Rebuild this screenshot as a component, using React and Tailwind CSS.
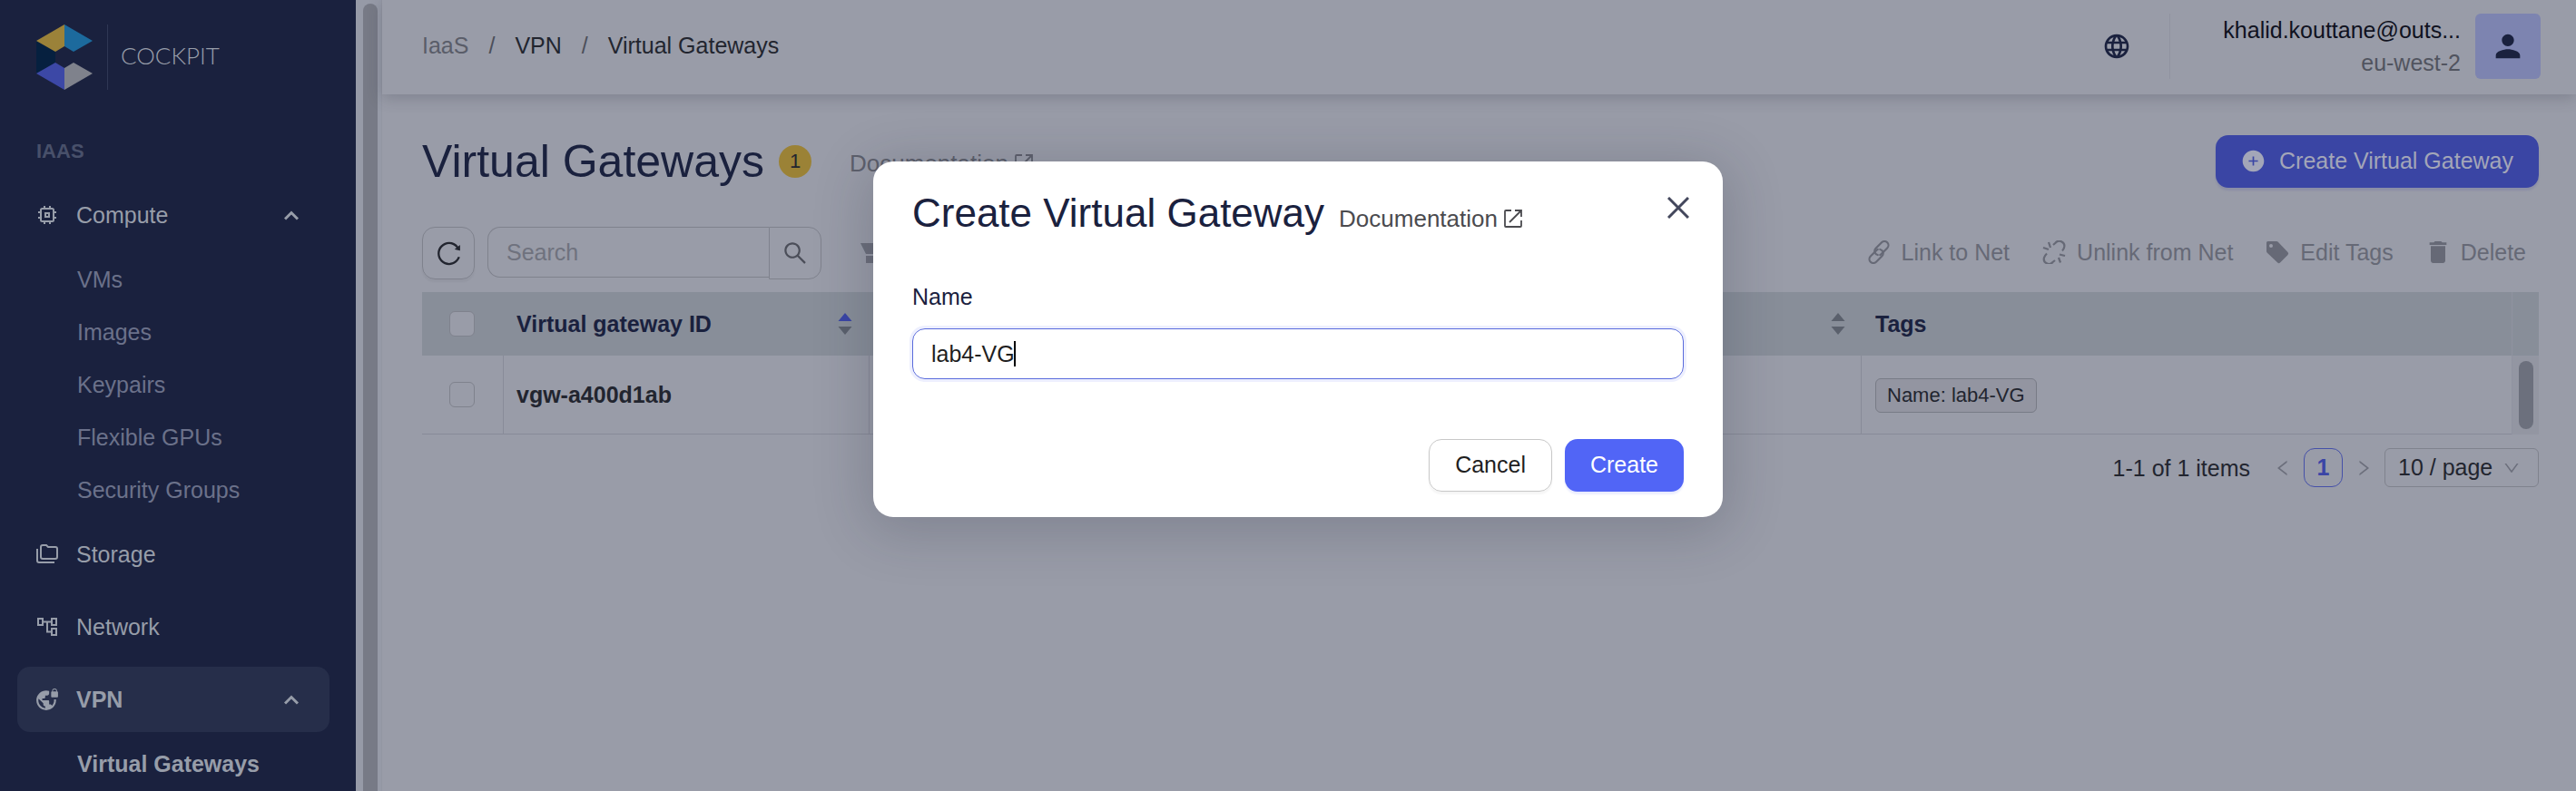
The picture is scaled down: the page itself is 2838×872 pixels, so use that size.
import { useState } from "react"
import { AiOutlineReload, AiOutlineSearch, AiFillPlusCircle, AiOutlineLeft, AiOutlineRight, AiOutlineDown } from "react-icons/ai"
import { MdVpnLock, MdPerson, MdDelete, MdLanguage } from "react-icons/md"

const COMPUTE_LINKS = ["VMs", "Images", "Keypairs", "Flexible GPUs", "Security Groups"]

function Logo() {
  return (
    <svg width="62" height="72" viewBox="0 0 62 72" aria-hidden="true">
      <path d="M0 18 L21 30 V42 L0 54 Z" fill="#06203f" />
      <path d="M31 0 V24 L21 30 L0 18 Z" fill="#9b8239" />
      <path d="M31 0 L62 18 L41 30 L31 24 Z" fill="#1c6a9d" />
      <path d="M0 54 L21 42 L31 48 V72 Z" fill="#3c48a6" />
      <path d="M31 48 L41 42 L62 54 L31 72 Z" fill="#7f828c" />
    </svg>
  )
}

function ChipIcon() {
  return (
    <svg width="20" height="20" viewBox="0 0 20 20" fill="none" stroke="currentColor" strokeWidth="2">
      <rect x="3" y="3" width="14" height="14" rx="1.5" />
      <rect x="8" y="8" width="4" height="4" />
      <path d="M7 0v3M13 0v3M7 17v3M13 17v3M0 7h3M0 13h3M17 7h3M17 13h3" />
    </svg>
  )
}

function FoldersIcon() {
  return (
    <svg width="24" height="22" viewBox="0 0 24 22" fill="none" stroke="currentColor" strokeWidth="2" className="shrink-0">
      <path d="M5 3a2 2 0 0 1 2-2h4l2 2h8a2 2 0 0 1 2 2v9a2 2 0 0 1-2 2H7a2 2 0 0 1-2-2Z" />
      <path d="M1 5V18a2 2 0 0 0 2 2H20" />
    </svg>
  )
}

function TreeIcon() {
  return (
    <svg width="22" height="20" viewBox="0 0 22 20" fill="none" stroke="currentColor" strokeWidth="2">
      <rect x="1" y="1" width="5" height="7" />
      <rect x="16" y="1" width="5" height="7" />
      <rect x="16" y="12" width="5" height="7" />
      <path d="M6 4.5h10M11 4.500v11h5" />
    </svg>
  )
}

function ChevronUp() {
  return (
    <svg width="16" height="11" viewBox="0 0 16 11" fill="none" stroke="currentColor" strokeWidth="3">
      <path d="M1 9.500L8 2.500L15 9.500" />
    </svg>
  )
}

function ExternalIcon() {
  return (
    <svg width="20" height="20" viewBox="0 0 20 20" fill="none" stroke="currentColor" strokeWidth="1.800">
      <path d="M8 1H2a1 1 0 0 0-1 1v16a1 1 0 0 0 1 1h16a1 1 0 0 0 1-1v-6" />
      <path d="M12 1h7v7M19 1L6 14" />
    </svg>
  )
}

function LinkIcon() {
  return (
    <svg width="26" height="26" viewBox="0 0 24 24" fill="none" stroke="currentColor" strokeWidth="2" strokeLinecap="round">
      <path d="M13.200 14.800a4.200 4.200 0 0 0 1.300-1l6-6a4 4 0 0 0-5.700-5.700l-6 6a4 4 0 0 0 2 6.700" />
      <path d="M10.800 9.200a4.200 4.200 0 0 0-1.300 1l-6 6a4 4 0 0 0 5.700 5.700l6-6a4 4 0 0 0-2-6.700" />
    </svg>
  )
}

function UnlinkIcon() {
  return (
    <svg width="26" height="26" viewBox="0 0 26 26" fill="none" stroke="currentColor" strokeWidth="2.200">
      <path d="M12 5l2.500-2.200a5.500 5.500 0 0 1 9.500 5.200q-.500 2-2 3.500" />
      <path d="M14 22l-2.500 2a5.500 5.500 0 0 1-9.500-5q.500-2 3-4.500" />
      <path d="M7 2l2 6M1 8l6 2M25 17l-6-1.500M18 19l2 5.500" />
    </svg>
  )
}

function TagIcon() {
  return (
    <svg width="26" height="26" viewBox="0 0 26 26" fill="currentColor">
      <path fillRule="evenodd" d="M2.500 1H12a2 2 0 0 1 1.500.600l11 11.500a2 2 0 0 1 0 2.800l-8.500 8.700a2 2 0 0 1-2.800 0L1.600 13.500A2 2 0 0 1 1 12V2.500A1.500 1.500 0 0 1 2.500 1ZM6 4a2 2 0 1 0 0 4 2 2 0 0 0 0-4Z" />
    </svg>
  )
}

function Sorter({ active }) {
  return (
    <svg width="16" height="24" viewBox="0 0 16 24" className="shrink-0">
      <path d="M8 0 L15.500 9 H0.500 Z" fill={active ? "#3a45a6" : "#5a606c"} />
      <path d="M8 24 L15.500 15 H0.500 Z" fill="#5a606c" />
    </svg>
  )
}

function MenuItem({ icon, label, open, active }) {
  return (
    <button
      type="button"
      className={`flex h-[72px] w-full items-center rounded-[14px] pl-[21px] pr-[34px] ${active ? "bg-[#262e4a] font-bold" : ""}`}
    >
      <span className="flex w-6 justify-center">{icon}</span>
      <span className="ml-5 flex-1 text-left">{label}</span>
      {open && <ChevronUp />}
    </button>
  )
}

function Sidebar() {
  return (
    <aside className="flex w-[392px] shrink-0 flex-col overflow-hidden bg-[#1a213e] text-[#979da9]">
      <div className="mt-[27px] flex h-[72px] shrink-0 items-center pl-10">
        <Logo />
        <span className="ml-4 h-full w-px bg-[#2f3754]" />
        <span className="ml-3.5 pb-1 font-['Lato',sans-serif] text-[26px] font-light">COCKPIT</span>
      </div>
      <h2 className="mt-[52px] pl-10 text-[22px] leading-8 font-bold text-[#48506a]">IAAS</h2>
      <nav className="mt-[18px] flex flex-col pl-[19px] pr-[29px]">
        <MenuItem icon={<ChipIcon />} label="Compute" open />
        <ul className="pt-1.5 pb-1.5">
          {COMPUTE_LINKS.map((label) => (
            <li key={label}>
              <a href="#" className="flex h-[58px] items-center pl-[66px] text-[#6b718a]">{label}</a>
            </li>
          ))}
        </ul>
        <div className="flex flex-col gap-2">
          <MenuItem icon={<FoldersIcon />} label="Storage" />
          <MenuItem icon={<TreeIcon />} label="Network" />
          <MenuItem icon={<MdVpnLock size={26} className="shrink-0" />} label="VPN" open active />
        </div>
        <a href="#" className="mt-1.5 flex h-[58px] items-center pl-[66px] font-bold">Virtual Gateways</a>
      </nav>
    </aside>
  )
}

function Header() {
  return (
    <header className="relative flex h-[104px] shrink-0 items-center pl-11 pr-[39px] pb-0.5 shadow-[0_4px_16px_rgba(40,44,64,0.24)]">
      <nav aria-label="Breadcrumb" className="flex flex-1 gap-[22px] pb-0.5 text-[#22252f]">
        <span className="text-[#5a5d69]">IaaS</span>
        <span className="text-[#4c4f5a]">/</span>
        <a href="#">VPN</a>
        <span className="text-[#4c4f5a]">/</span>
        <a href="#">Virtual Gateways</a>
      </nav>
      <button type="button" aria-label="Language" className="mr-[42px] text-[#1a213e]">
        <MdLanguage size={32} />
      </button>
      <div className="flex h-[72px] items-center border-l border-[#9093a0] pl-[58px]">
        <div className="mr-4 text-right leading-9">
          <p className="text-[#10121f]">khalid.kouttane@outs...</p>
          <p className="text-[#51545f]">eu-west-2</p>
        </div>
        <button type="button" aria-label="Account" className="flex size-[72px] items-center justify-center rounded-md bg-[#7d84b0] text-[#1a213e]">
          <MdPerson size={40} />
        </button>
      </div>
    </header>
  )
}

function Toolbar() {
  const actions = [
    { label: "Link to Net", icon: <LinkIcon /> },
    { label: "Unlink from Net", icon: <UnlinkIcon /> },
    { label: "Edit Tags", icon: <TagIcon /> },
    { label: "Delete", icon: <MdDelete size={32} className="-mx-[3px]" /> },
  ]
  return (
    <div className="mt-[42px] flex h-[58px] items-start">
      <button type="button" aria-label="Refresh" className="flex size-[58px] items-center justify-center rounded-[14px] border border-[#7f828d] text-[#22252f] shadow-[0_3px_2px_rgba(0,0,0,0.04)]">
        <AiOutlineReload size={31} />
      </button>
      <div className="ml-3.5 flex items-start">
        <input
          type="search"
          aria-label="Search"
          placeholder="Search"
          className="h-14 w-[310px] rounded-l-[14px] border border-r-0 border-[#7f828d] px-5 outline-none placeholder:text-[#6f727e]"
        />
        <button type="button" aria-label="Run search" className="flex size-[58px] items-center justify-center rounded-r-[14px] border border-[#7f828d] text-[#4b4e59]">
          <AiOutlineSearch size={30} />
        </button>
      </div>
      <button type="button" aria-label="Filter" className="ml-[43px] flex h-[58px] items-center text-[#6c6f7c]">
        <svg width="28" height="22" viewBox="0 0 28 22" fill="currentColor">
          <path d="M0 0h28l-6 12H6ZM6 14h16v8H6Z" />
        </svg>
      </button>
      <div className="ml-auto flex h-[58px] items-center gap-9 pr-3.5 pb-0.5 text-[#666976]">
        {actions.map((a) => (
          <button key={a.label} type="button" disabled className="flex items-center gap-3">
            {a.icon}
            {a.label}
          </button>
        ))}
      </div>
    </div>
  )
}

function GatewayTable() {
  const box = "block size-7 appearance-none rounded-md border border-[#7f828d] bg-[#999ca8]"
  return (
    <div className="mt-3.5 flex">
      <table className="flex-1 table-fixed border-separate border-spacing-0 text-left">
        <colgroup>
          <col className="w-[90px]" />
          <col className="w-[403px]" />
          <col />
          <col className="w-[716px]" />
        </colgroup>
        <thead className="bg-[#888e99] text-[#1a213e]">
          <tr className="h-[70px]">
            <th className="pl-[30px]"><input type="checkbox" aria-label="Select all" className={box} /></th>
            <th className="pl-3.5 pr-[19px]">
              <div className="flex items-center justify-between">Virtual gateway ID <Sorter active /></div>
            </th>
            <th className="pr-[18px]"><div className="flex justify-end"><Sorter /></div></th>
            <th className="pl-[15px]">Tags</th>
          </tr>
        </thead>
        <tbody>
          <tr className="h-[87px]">
            <td className="border-r border-b border-[#888b98] pl-[30px]"><input type="checkbox" aria-label="Select vgw-a400d1ab" className={box} /></td>
            <td className="border-r border-b border-[#888b98] pl-3.5 font-bold text-[#22252f]">vgw-a400d1ab</td>
            <td className="border-r border-b border-[#888b98]" />
            <td className="border-b border-[#888b98] pl-[15px]">
              <span className="inline-flex h-[38px] items-center rounded-md border border-[#787b86] bg-[#9395a1] px-3 text-[22px] text-[#22252f]">
                Name: lab4-VG
              </span>
            </td>
          </tr>
        </tbody>
      </table>
      <div className="flex w-[30px] flex-col border-l border-[#9093a0]">
        <div className="h-[70px] bg-[#888e99]" />
        <div className="flex flex-1 justify-center bg-[#9396a2] py-1.5">
          <div className="w-4 rounded-full bg-[#6c707d]" />
        </div>
      </div>
    </div>
  )
}

function Pagination() {
  return (
    <div className="mt-[15px] flex h-[43px] items-center justify-end text-[#22252f]">
      <span>1-1 of 1 items</span>
      <button type="button" aria-label="Previous page" className="ml-[25px] text-[#6c6f7c]"><AiOutlineLeft size={22} /></button>
      <button type="button" className="ml-3 size-[43px] rounded-xl border border-[#4550a8] pb-0.5 font-bold text-[#3a45a6]">1</button>
      <button type="button" aria-label="Next page" className="ml-3 text-[#6c6f7c]"><AiOutlineRight size={22} /></button>
      <div className="relative ml-3">
        <select aria-label="Page size" className="h-[43px] w-[170px] appearance-none rounded-md border border-[#7f828d] pb-0.5 pl-3.5 outline-none">
          <option>10 / page</option>
        </select>
        <AiOutlineDown size={20} className="pointer-events-none absolute top-3 right-5 text-[#6c6f7c]" />
      </div>
    </div>
  )
}

function CreateModal() {
  const [name, setName] = useState("lab4-VG")
  return (
    <div className="absolute inset-0 flex items-start justify-center pt-[178px] pl-[22px]">
      <div role="dialog" aria-modal="true" aria-labelledby="modal-title" className="flex w-[936px] flex-col rounded-[22px] bg-white px-[43px] pt-8 pb-7 shadow-[0_10px_60px_8px_rgba(30,34,56,0.2)]">
        <div className="flex items-start justify-between">
          <div className="flex items-baseline gap-4">
            <h2 id="modal-title" className="text-[44px] leading-[50px] text-[#1a213e]">Create Virtual Gateway</h2>
            <a href="#" className="flex items-center gap-[7px] text-[26px] text-[#4b4b4f]">
              Documentation <ExternalIcon />
            </a>
          </div>
          <button type="button" aria-label="Close" className="mt-[7px] -mr-[6px] text-[#43475c]">
            <svg width="24" height="24" viewBox="0 0 24 24" fill="none" stroke="currentColor" strokeWidth="3">
              <path d="M1 1L23 23M23 1L1 23" />
            </svg>
          </button>
        </div>
        <label htmlFor="gateway-name" className="mt-[50px] leading-[34px] text-[#1a213e]">Name</label>
        <div className="relative mt-[18px]">
          <input
            id="gateway-name"
            value={name}
            onChange={(e) => setName(e.target.value)}
            className="h-14 w-full rounded-[14px] border border-[#5a6bdc] px-5 text-[#1f1f1f] shadow-[0_0_0_3px_rgba(80,100,245,0.1)] outline-none"
          />
          <span className="absolute top-3.5 left-[112px] h-7 w-0.5 bg-black" />
        </div>
        <div className="mt-[66px] flex justify-end gap-3.5">
          <button type="button" className="h-[58px] rounded-[14px] border border-[#c8c8c8] px-7 pb-0.5 text-[#1f1f1f] shadow-[0_3px_2px_rgba(0,0,0,0.04)]">Cancel</button>
          <button type="button" className="h-[58px] rounded-[14px] bg-[#5165f6] px-7 pb-0.5 text-white shadow-[0_3px_2px_rgba(80,100,245,0.12)]">Create</button>
        </div>
      </div>
    </div>
  )
}

export default function App() {
  return (
    <div className="relative flex h-screen overflow-hidden bg-[#999ca8] font-['Liberation_Sans',Arial,sans-serif] text-[25px] leading-9">
      <Sidebar />
      <div className="flex w-[29px] shrink-0 border-r border-[#9396a2] bg-[#969aa7] pt-1 pl-2">
        <div className="w-4 rounded-t-full bg-[#777a86]" />
      </div>
      <div className="flex min-w-0 flex-1 flex-col">
        <Header />
        <main className="pt-11 pr-[41px] pl-11">
          <div className="flex h-[60px] items-center">
            <h1 className="text-[50px] leading-[60px] text-[#1a213e]">Virtual Gateways</h1>
            <span className="ml-4 flex size-9 items-center justify-center rounded-full bg-[#9b8236] text-[22px] text-[#22252f]">1</span>
            <a href="#" className="ml-[42px] flex items-center gap-[7px] pt-1 text-[26px] text-[#5d606c]">
              Documentation <ExternalIcon />
            </a>
            <button type="button" className="ml-auto flex h-[58px] items-center gap-[15px] rounded-[14px] bg-[#3a45a4] px-7 pb-0.5 text-[#a3a6b8] shadow-[0_3px_2px_rgba(58,69,164,0.15)]">
              <AiFillPlusCircle size={27} /> Create Virtual Gateway
            </button>
          </div>
          <Toolbar />
          <GatewayTable />
          <Pagination />
        </main>
      </div>
      <CreateModal />
    </div>
  )
}
